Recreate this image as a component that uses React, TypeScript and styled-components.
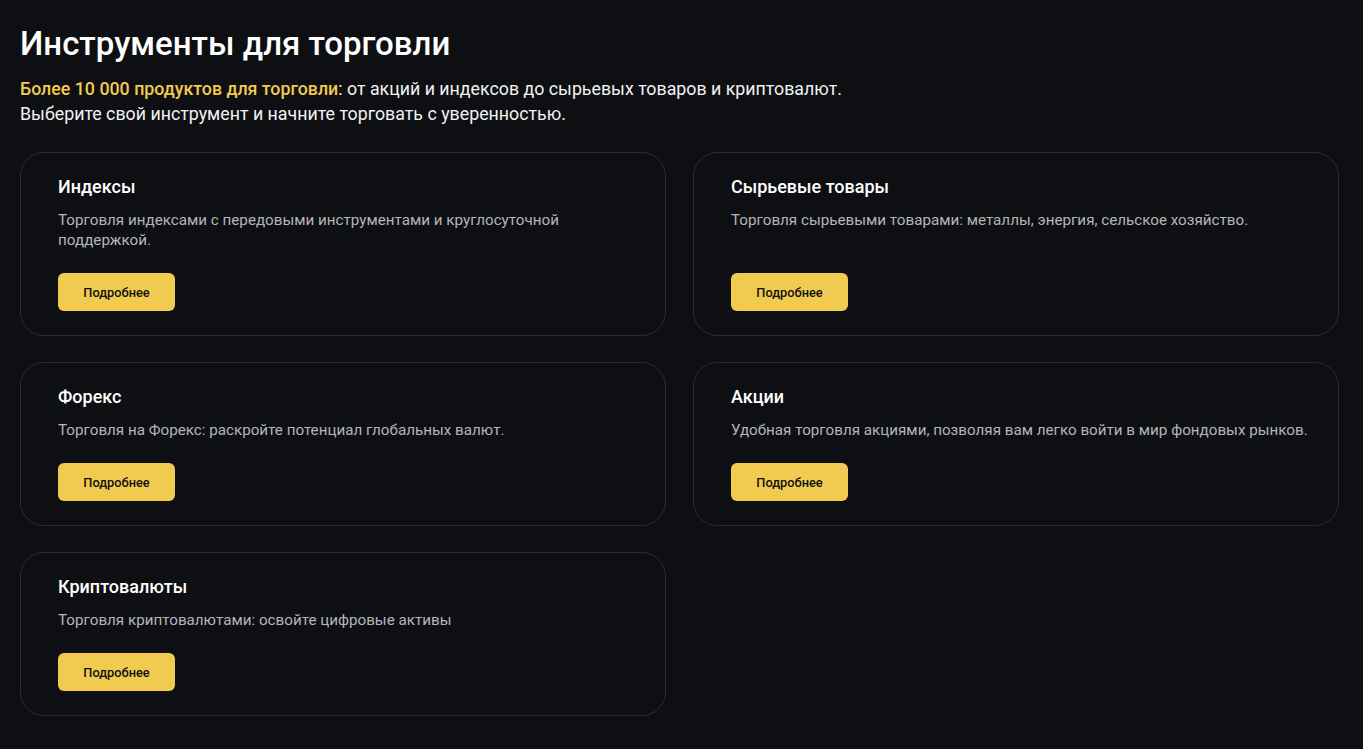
import styled, { createGlobalStyle } from "styled-components";

const GlobalStyle = createGlobalStyle`
    * {
        box-sizing: border-box;
    }

    body {
        margin: 0;
        background-color: #0e0f12;
        color: #ffffff;
        font-family: Roboto, "Noto Sans", sans-serif;
    }
`

const Page = styled.main`
    padding: 24px 24px 32px 20px;
    min-height: 100vh;
    background-color: #0e0f12;
`

const Title = styled.h1`
    margin: 0;
    font-size: 33px;
    line-height: 40px;
    font-weight: 500;
    color: #ffffff;
`

const Lead = styled.p`
    margin: 12px 0 0;
    font-size: 17.8px;
    line-height: 25px;
    color: #f2f2f2;
`

const Accent = styled.span`
    color: #f0cb4f;
    font-weight: 500;
`

const Grid = styled.div`
    display: grid;
    grid-template-columns: 1fr 1fr;
    column-gap: 27px;
    row-gap: 26px;
    margin-top: 26px;
`

const Card = styled.article`
    display: flex;
    flex-direction: column;
    align-items: flex-start;
    padding: 21px 24px 23.5px 37px;
    border: 1px solid #2c2d31;
    border-radius: 24px;
    background-color: #0e0f12;
`

const CardTitle = styled.h3`
    margin: 0;
    font-size: 18px;
    line-height: 25px;
    font-weight: 500;
    color: #ffffff;
`

const CardText = styled.p`
    margin: 12px 0 0;
    font-size: 15.2px;
    line-height: 19.5px;
    color: #b4b5ba;
`

const MoreButton = styled.button`
    margin-top: auto;
    width: 117px;
    height: 38px;
    border: none;
    border-radius: 6px;
    background-color: #f0cb4f;
    color: #111111;
    font-family: Roboto, sans-serif;
    font-size: 12.8px;
    font-weight: 500;
    cursor: pointer;
`

const Spacer = styled.div`
    height: 23px;
    flex-shrink: 0;
`

const instruments = [
    {
        title: "Индексы",
        text: "Торговля индексами с передовыми инструментами и круглосуточной поддержкой.",
    },
    {
        title: "Сырьевые товары",
        text: "Торговля сырьевыми товарами: металлы, энергия, сельское хозяйство.",
    },
    {
        title: "Форекс",
        text: "Торговля на Форекс: раскройте потенциал глобальных валют.",
    },
    {
        title: "Акции",
        text: "Удобная торговля акциями, позволяя вам легко войти в мир фондовых рынков.",
    },
    {
        title: "Криптовалюты",
        text: "Торговля криптовалютами: освойте цифровые активы",
    },
]

const App = () => {
    return (
        <>
            <GlobalStyle />
            <Page>
                <Title>Инструменты для торговли</Title>
                <Lead>
                    <Accent>Более 10 000 продуктов для торговли</Accent>: от акций и индексов до сырьевых товаров и криптовалют.
                    <br />
                    Выберите свой инструмент и начните торговать с уверенностью.
                </Lead>
                <Grid>
                    {instruments.map((item) => (
                        <Card key={item.title}>
                            <CardTitle>{item.title}</CardTitle>
                            <CardText>{item.text}</CardText>
                            <Spacer />
                            <MoreButton>Подробнее</MoreButton>
                        </Card>
                    ))}
                </Grid>
            </Page>
        </>
    )
}

export default App;
